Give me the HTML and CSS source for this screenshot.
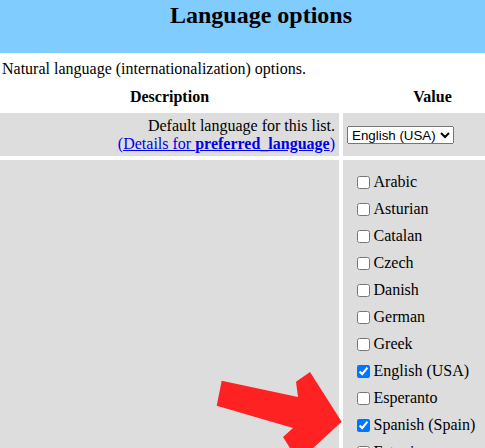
FILE: index.html
```html
<!DOCTYPE html>
<html>
<head>
<meta charset="utf-8">
<title>Language options</title>
<link rel="stylesheet" href="styles.css">
</head>
<body>
<div class="page">
  <div class="banner"><h1 class="title">Language options</h1></div>
  <p class="intro">Natural language (internationalization) options.</p>
  <div class="grid">
    <div class="th">Description</div>
    <div class="th">Value</div>
    <div class="cell desc">Default language for this list.<br><a href="#" class="link">(Details for <b>preferred_language</b>)</a></div>
    <div class="cell val">
      <select class="sel"><option>English (USA)</option><option>Spanish (Spain)</option></select>
    </div>
    <div class="cell desc tall"></div>
    <div class="cell val list">
      <label class="item"><input type="checkbox" class="cb">Arabic</label>
      <label class="item"><input type="checkbox" class="cb">Asturian</label>
      <label class="item"><input type="checkbox" class="cb">Catalan</label>
      <label class="item"><input type="checkbox" class="cb">Czech</label>
      <label class="item"><input type="checkbox" class="cb">Danish</label>
      <label class="item"><input type="checkbox" class="cb">German</label>
      <label class="item"><input type="checkbox" class="cb">Greek</label>
      <label class="item"><input type="checkbox" class="cb" checked>English (USA)</label>
      <label class="item"><input type="checkbox" class="cb">Esperanto</label>
      <label class="item"><input type="checkbox" class="cb" checked>Spanish (Spain)</label>
      <label class="item"><input type="checkbox" class="cb">Estonian</label>
      <label class="item"><input type="checkbox" class="cb">Basque</label>
    </div>
  </div>
  <svg class="arrow" width="522" height="480" viewBox="0 0 522 480" aria-hidden="true">
    <polygon fill="#ff2222" points="221.7,380.7 298,397 296,381.7 310,372 341.7,421.7 300,460 295,456 283,437 293,428 216.7,405.7"/>
  </svg>
</div>
</body>
</html>
```
FILE: styles.css
```css
html { overflow: hidden; }
body {
  margin: 0;
  font-family: "Liberation Serif", "Times New Roman", serif;
  font-size: 16px;
  color: #000;
  background: #fff;
}
.page {
  position: relative;
  width: 522px;
}
.banner {
  background: #80ccff;
  height: 53px;
  box-sizing: border-box;
  padding-top: 2px;
}
.title {
  margin: 0;
  font-size: 24px;
  font-weight: bold;
  text-align: center;
  line-height: 26.6px;
}
.intro {
  margin: 0;
  padding: 7px 2px 0;
  line-height: 18px;
}
.grid {
  display: grid;
  grid-template-columns: 339px 179px;
  column-gap: 4px;
  row-gap: 4px;
}
.th {
  font-weight: bold;
  text-align: center;
  line-height: 18px;
  padding-top: 10px;
  padding-bottom: 3px;
}
.cell {
  background: #dddddd;
}
.desc {
  text-align: right;
  line-height: 18px;
  padding: 3.5px 4px 3.5px 4px;
}
.link {
  color: #0000ee;
  text-decoration: underline;
}
.val {
  display: flex;
  align-items: center;
  padding-left: 4px;
}
.sel {
  font-family: Arial, "Liberation Sans", sans-serif;
  font-size: 13.33px;
  height: 18px;
  width: 107px;
  padding: 0;
}
.list {
  flex-direction: column;
  align-items: flex-start;
  padding: 13px 0 0 13.5px;
  height: 300px;
}
.item {
  display: flex;
  align-items: center;
  height: 18px;
  margin-bottom: 9px;
  line-height: 18px;
}
.cb {
  margin: 0 4px 0 0;
  width: 13px;
  height: 13px;
}
.arrow {
  position: absolute;
  left: 0;
  top: 0;
  pointer-events: none;
}
```
